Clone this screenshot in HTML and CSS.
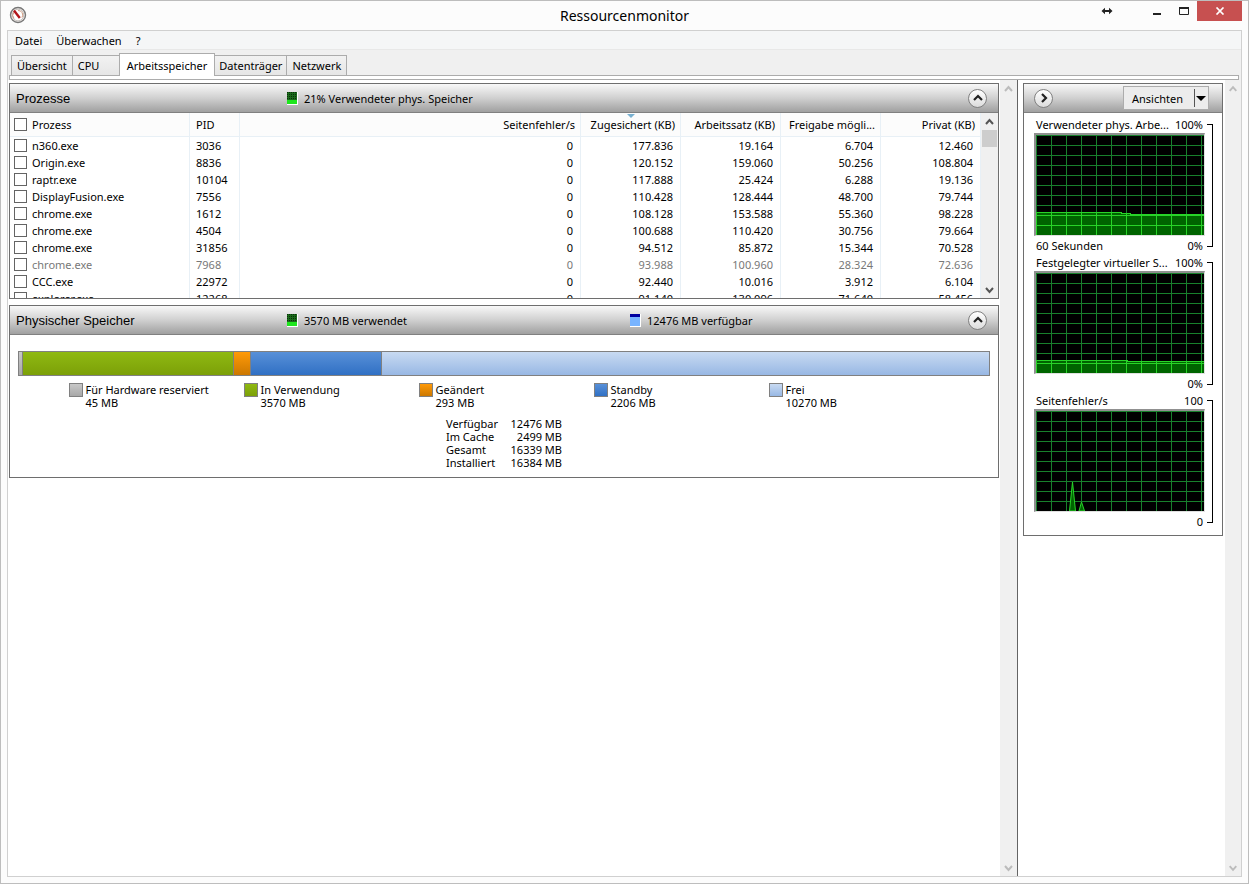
FILE: index.html
```html
<!DOCTYPE html>
<html lang="de">
<head>
  <meta charset="UTF-8">
  <title>Ressourcenmonitor</title>
  <link rel="stylesheet" href="styles.css">
</head>
<body>
  <div class="window">
    <header class="titlebar">
      <svg class="app-icon" width="18" height="18" viewBox="0 0 18 18">
        <circle cx="9" cy="9" r="7.5" fill="#f4f0ee" stroke="#777" stroke-width="1.4"/>
        <circle cx="9" cy="9" r="5.8" fill="#fff" stroke="#c9c4c0" stroke-width="1"/>
        <path d="M5 12.5A5 5 0 0 1 5 6M9 4.5a4.5 4.5 0 0 1 4 7" fill="none" stroke="#d09a80" stroke-width="1"/>
        <path d="M5 4.5l5.8 7.6" stroke="#b3161b" stroke-width="2.4"/>
      </svg>
      <h1 class="window-title">Ressourcenmonitor</h1>
      <div class="window-buttons">
        <button class="win-btn win-move" aria-label="Verschieben">
          <svg width="12" height="8" viewBox="0 0 12 8"><path d="M2 4h8" stroke="#222" stroke-width="2"/><path d="M0.5 4L4 0.8v6.4zM11.5 4L8 0.8v6.4z" fill="#222"/></svg>
        </button>
        <button class="win-btn" aria-label="Minimieren">
          <svg width="10" height="10" viewBox="0 0 10 10"><path d="M1 7h8v2H1z" fill="#222"/></svg>
        </button>
        <button class="win-btn" aria-label="Maximieren">
          <svg width="12" height="10" viewBox="0 0 12 10"><path d="M1.5 1.5h9v7h-9z" fill="none" stroke="#222"/><path d="M1 2h10" stroke="#222" stroke-width="2"/></svg>
        </button>
        <button class="win-btn win-close" aria-label="Schließen">
          <svg width="10" height="8" viewBox="0 0 10 8"><path d="M1.5 0.5l7 7M8.5 0.5l-7 7" stroke="#fff" stroke-width="1.7"/></svg>
        </button>
      </div>
    </header>

    <div class="client">
      <nav class="menubar">
        <button>Datei</button>
        <button>Überwachen</button>
        <button>?</button>
      </nav>

      <div class="tabs" role="tablist">
        <button class="tab" role="tab">Übersicht</button>
        <button class="tab" role="tab">CPU</button>
        <button class="tab active" role="tab" aria-selected="true">Arbeitsspeicher</button>
        <button class="tab" role="tab">Datenträger</button>
        <button class="tab" role="tab">Netzwerk</button>
      </div>
      <div class="tab-strip"></div>

      <div class="content">
        <main class="details">
          <section class="panel">
            <div class="panel-head">
              <h2>Prozesse</h2>
              <div class="metric"><span class="mini mini-green"></span>21% Verwendeter phys. Speicher</div>
              <div></div>
              <button class="round-btn" aria-label="Zuklappen"><svg width="10" height="8" viewBox="0 0 10 8"><path d="M1 6l4-4 4 4" fill="none" stroke="#222" stroke-width="2.2"/></svg></button>
            </div>
            <div class="list">
              <table class="process-table">
                <thead>
                  <tr>
                    <th class="col-name"><label><input type="checkbox"><span>Prozess</span></label></th>
                    <th class="col-pid">PID</th>
                    <th class="num">Seitenfehler/s</th>
                    <th class="num col-mem sorted">Zugesichert (KB)</th>
                    <th class="num col-mem">Arbeitssatz (KB)</th>
                    <th class="num col-mem">Freigabe mögli...</th>
                    <th class="num col-mem">Privat (KB)</th>
                  </tr>
                </thead>
                <tbody>
                  <tr><td><label><input type="checkbox">n360.exe</label></td><td>3036</td><td class="num">0</td><td class="num">177.836</td><td class="num">19.164</td><td class="num">6.704</td><td class="num">12.460</td></tr>
                  <tr><td><label><input type="checkbox">Origin.exe</label></td><td>8836</td><td class="num">0</td><td class="num">120.152</td><td class="num">159.060</td><td class="num">50.256</td><td class="num">108.804</td></tr>
                  <tr><td><label><input type="checkbox">raptr.exe</label></td><td>10104</td><td class="num">0</td><td class="num">117.888</td><td class="num">25.424</td><td class="num">6.288</td><td class="num">19.136</td></tr>
                  <tr><td><label><input type="checkbox">DisplayFusion.exe</label></td><td>7556</td><td class="num">0</td><td class="num">110.428</td><td class="num">128.444</td><td class="num">48.700</td><td class="num">79.744</td></tr>
                  <tr><td><label><input type="checkbox">chrome.exe</label></td><td>1612</td><td class="num">0</td><td class="num">108.128</td><td class="num">153.588</td><td class="num">55.360</td><td class="num">98.228</td></tr>
                  <tr><td><label><input type="checkbox">chrome.exe</label></td><td>4504</td><td class="num">0</td><td class="num">100.688</td><td class="num">110.420</td><td class="num">30.756</td><td class="num">79.664</td></tr>
                  <tr><td><label><input type="checkbox">chrome.exe</label></td><td>31856</td><td class="num">0</td><td class="num">94.512</td><td class="num">85.872</td><td class="num">15.344</td><td class="num">70.528</td></tr>
                  <tr class="ended"><td><label><input type="checkbox">chrome.exe</label></td><td>7968</td><td class="num">0</td><td class="num">93.988</td><td class="num">100.960</td><td class="num">28.324</td><td class="num">72.636</td></tr>
                  <tr><td><label><input type="checkbox">CCC.exe</label></td><td>22972</td><td class="num">0</td><td class="num">92.440</td><td class="num">10.016</td><td class="num">3.912</td><td class="num">6.104</td></tr>
                  <tr><td><label><input type="checkbox">explorer.exe</label></td><td>12268</td><td class="num">0</td><td class="num">91.140</td><td class="num">130.096</td><td class="num">71.640</td><td class="num">58.456</td></tr>
                </tbody>
              </table>
              <div class="scrollbar">
                <svg class="arrow" viewBox="0 0 17 17"><path d="M5 11l3.5-4 3.5 4"/></svg>
                <div class="thumb"></div>
                <svg class="arrow last" viewBox="0 0 17 17"><path d="M5 7l3.5 4L12 7"/></svg>
              </div>
            </div>
          </section>

          <section class="panel">
            <div class="panel-head">
              <h2>Physischer Speicher</h2>
              <div class="metric"><span class="mini mini-green"></span>3570 MB verwendet</div>
              <div class="metric"><span class="mini mini-blue"></span>12476 MB verfügbar</div>
              <button class="round-btn" aria-label="Zuklappen"><svg width="10" height="8" viewBox="0 0 10 8"><path d="M1 6l4-4 4 4" fill="none" stroke="#222" stroke-width="2.2"/></svg></button>
            </div>
            <div class="memory">
              <!-- segment widths follow the MB values -->
              <div class="memory-bar">
                <div class="hardware" style="flex-grow: 45"></div>
                <div class="used" style="flex-grow: 3570"></div>
                <div class="modified" style="flex-grow: 293"></div>
                <div class="standby" style="flex-grow: 2206"></div>
                <div class="free" style="flex-grow: 10270"></div>
              </div>
              <ul class="legend">
                <li><span class="swatch hardware"></span><div>Für Hardware reserviert<br>45 MB</div></li>
                <li><span class="swatch used"></span><div>In Verwendung<br>3570 MB</div></li>
                <li><span class="swatch modified"></span><div>Geändert<br>293 MB</div></li>
                <li><span class="swatch standby"></span><div>Standby<br>2206 MB</div></li>
                <li><span class="swatch free"></span><div>Frei<br>10270 MB</div></li>
              </ul>
              <table class="totals">
                <tr><th>Verfügbar</th><td>12476 MB</td></tr>
                <tr><th>Im Cache</th><td>2499 MB</td></tr>
                <tr><th>Gesamt</th><td>16339 MB</td></tr>
                <tr><th>Installiert</th><td>16384 MB</td></tr>
              </table>
            </div>
          </section>
        </main>
        <div class="scrollbar disabled">
          <svg class="arrow" viewBox="0 0 17 17"><path d="M5 11l3.5-4 3.5 4"/></svg>
          <svg class="arrow last" viewBox="0 0 17 17"><path d="M5 7l3.5 4L12 7"/></svg>
        </div>

        <aside class="graphs">
          <section class="panel">
            <div class="panel-head graph-head">
              <button class="round-btn" aria-label="Ausblenden"><svg width="8" height="10" viewBox="0 0 8 10"><path d="M2 1l4 4-4 4" fill="none" stroke="#222" stroke-width="2.2"/></svg></button>
              <button class="views-btn">Ansichten<span class="views-arrow"></span></button>
            </div>
            <div class="graph-list">
              <div class="graph">
                <div class="graph-body">
                  <div class="graph-label"><span>Verwendeter phys. Arbe...</span><span>100%</span></div>
                  <svg class="plot" viewBox="0 0 168 100" shape-rendering="crispEdges">
                    <defs>
                      <pattern id="grid" width="15" height="10" patternUnits="userSpaceOnUse"><path d="M0 0h15v1H1v9H0z" fill="#18802c"/></pattern>
                      <pattern id="gridLit" width="15" height="10" patternUnits="userSpaceOnUse"><path d="M0 0h15v1H1v9H0z" fill="#28d428"/></pattern>
                    </defs>
                    <rect width="168" height="100" fill="url(#grid)"/>
                    <path d="M0 77h86v1h9v1h73v21H0z" fill="#006400"/>
                    <path d="M0 77h86v1h9v1h73v21H0z" fill="url(#gridLit)"/>
                    <path d="M0 77h86v1h9v1h73v1H94v-1h-9v-1H0z" fill="#28d428"/>
                  </svg>
                  <div class="graph-label"><span>60 Sekunden</span><span>0%</span></div>
                </div>
                <div class="bracket"></div>
              </div>
              <div class="graph">
                <div class="graph-body">
                  <div class="graph-label"><span>Festgelegter virtueller S...</span><span>100%</span></div>
                  <svg class="plot" viewBox="0 0 168 100" shape-rendering="crispEdges">
                    <rect width="168" height="100" fill="url(#grid)"/>
                    <path d="M0 87h92v1h76v12H0z" fill="#006400"/>
                    <path d="M0 87h92v1h76v12H0z" fill="url(#gridLit)"/>
                    <path d="M0 87h92v1h76v1H91v-1H0z" fill="#28d428"/>
                  </svg>
                  <div class="graph-label"><span></span><span>0%</span></div>
                </div>
                <div class="bracket"></div>
              </div>
              <div class="graph">
                <div class="graph-body">
                  <div class="graph-label"><span>Seitenfehler/s</span><span>100</span></div>
                  <svg class="plot" viewBox="0 0 168 100">
                    <rect width="168" height="100" fill="url(#grid)" shape-rendering="crispEdges"/>
                    <path d="M33.5 100l3-29 3 29zM43 100l2.5-9 3 9z" fill="#006400" stroke="#28d428"/>
                  </svg>
                  <div class="graph-label"><span></span><span>0</span></div>
                </div>
                <div class="bracket"></div>
              </div>
            </div>
          </section>
        </aside>
        <div class="scrollbar outer disabled">
          <svg class="arrow" viewBox="0 0 17 17"><path d="M5 11l3.5-4 3.5 4"/></svg>
          <svg class="arrow last" viewBox="0 0 17 17"><path d="M5 7l3.5 4L12 7"/></svg>
        </div>
      </div>
    </div>
  </div>
</body>
</html>
```

FILE: styles.css
```css
* {
  box-sizing: border-box;
}

body {
  margin: 0;
  font-family: "Noto Sans", "Open Sans", sans-serif;
  font-size: 11px;
  line-height: 13px;
  color: #000;
}

button {
  font: inherit;
  color: inherit;
  border: none;
  background: none;
  padding: 0;
}

svg {
  display: block;
}

.window {
  display: flex;
  flex-direction: column;
  height: 100vh;
  padding: 0 6px 6px;
  border: 1px solid #bdbdbd;
  background: #fcfcfc;
}

/* title bar */

.titlebar {
  display: grid;
  grid-template-columns: 1fr auto 1fr;
  height: 29px;
}

.app-icon {
  margin: 5px 0 0 2px;
}

.window-title {
  margin: 0;
  font-size: 14px;
  font-weight: normal;
  line-height: 29px;
}

.window-buttons {
  display: flex;
  justify-content: flex-end;
  align-items: flex-start;
}

.win-btn {
  display: flex;
  align-items: center;
  justify-content: center;
  width: 27px;
  height: 20px;
}

.win-move {
  margin-right: 23px;
}

.win-close {
  width: 45px;
  background: #c75050;
}

/* menu and tabs */

.client {
  flex: 1;
  display: flex;
  flex-direction: column;
  min-height: 0;
  border: 1px solid #d0d0d0;
  background: #f0f0f0;
}

.menubar {
  display: flex;
  gap: 14px;
  height: 19px;
  padding-left: 7px;
  background: #f5f6f7;
  border-bottom: 1px solid #e8e8e8;
}

.tabs {
  display: flex;
  align-items: flex-end;
  height: 25px;
  padding-left: 3px;
}

.tab {
  height: 20px;
  min-width: 47px;
  padding: 0 5px;
  text-align: left;
  border: 1px solid #acacac;
  border-width: 1px 1px 0 0;
  background: linear-gradient(#f2f2f2, #e6e6e6);
}

.tab:first-child {
  border-left-width: 1px;
}

.tab.active {
  height: 23px;
  margin: 0 0 -1px -1px;
  padding: 0 7px;
  border-left-width: 1px;
  background: #fff;
  z-index: 1;
}

.tab.active + .tab {
  padding: 0 4px;
}

.tab-strip {
  height: 5px;
  margin: 0 2px 0 1px;
  border: 1px solid #acacac;
  background: #fff;
}

/* panes */

.content {
  flex: 1;
  display: flex;
  min-height: 0;
  background: #fff;
}

.details {
  flex: 1;
  min-width: 0;
  display: flex;
  flex-direction: column;
  gap: 6px;
  padding: 3px 1px;
}

.graphs {
  width: 208px;
  padding: 3px 2px 0 5px;
  border-left: 1px solid #646464;
}

.panel {
  border: 1px solid #6e6e6e;
  background: #fff;
}

.panel-head {
  display: grid;
  grid-template-columns: 271px 343px 1fr 20px;
  align-items: center;
  height: 29px;
  padding: 0 10px 0 6px;
  border-bottom: 1px solid #808080;
  background: linear-gradient(#f8f8f8, #d0d0d0 50%, #a0a0a0);
}

.panel-head h2 {
  margin: 0;
  font-family: "Liberation Sans", Arial, sans-serif;
  font-size: 13px;
  font-weight: normal;
}

.panel-head .round-btn {
  grid-column: -2;
}

.metric {
  display: flex;
  align-items: center;
  gap: 6px;
}

.mini {
  width: 11px;
  height: 13px;
  border: 1px solid #fff;
  border-width: 0 1px 1px 0;
}

.mini-green {
  background:
    linear-gradient(transparent 8px, #1ee61e 8px),
    repeating-linear-gradient(90deg, transparent 0 1px, #1a6a1a 1px 2px),
    repeating-linear-gradient(#083008 0 1px, #1a6a1a 1px 2px);
}

.mini-blue {
  background: linear-gradient(#0000a0 3px, #78b4ff 3px);
}

.round-btn {
  display: flex;
  align-items: center;
  justify-content: center;
  width: 19px;
  height: 19px;
  border: 1px solid #808080;
  border-radius: 50%;
  background: linear-gradient(#fff, #dcdcdc);
}

/* process list */

.list {
  display: flex;
  height: 185px;
  overflow: hidden;
}

.process-table {
  flex: 1;
  align-self: flex-start;
  table-layout: fixed;
  border-collapse: separate;
  border-spacing: 0;
}

.process-table th,
.process-table td {
  height: 17px;
  padding: 0 6px;
  font-weight: normal;
  text-align: left;
  white-space: nowrap;
  border-right: 1px solid #e8f0f6;
}

.process-table th {
  height: 24px;
  background: #fcfcfc;
  border-bottom: 1px solid #e8f0f6;
}

.process-table .num {
  text-align: right;
}

.process-table th.num {
  padding-right: 5px;
}

.process-table td.num {
  padding-right: 7px;
}

.process-table label {
  display: flex;
  align-items: center;
  gap: 5px;
  margin-left: -2px;
}

.col-name {
  width: 180px;
}

.col-pid {
  width: 50px;
}

.col-mem {
  width: 100px;
}

.sorted {
  position: relative;
}

.sorted::after {
  content: "";
  position: absolute;
  top: 1px;
  left: 46px;
  border: 4px solid transparent;
  border-top-color: #78b0d0;
  border-bottom-width: 0;
}

.ended {
  color: #787878;
}

input[type="checkbox"] {
  appearance: none;
  width: 13px;
  height: 13px;
  margin: 0;
  border: 1px solid #646464;
  background: #fff;
}

/* scrollbars */

.scrollbar {
  display: flex;
  flex-direction: column;
  width: 17px;
  background: #f0f0f0;
}

.scrollbar.outer {
  width: 16px;
}

.arrow {
  width: 100%;
  height: 17px;
  fill: none;
  stroke: #555;
  stroke-width: 2;
}

.disabled .arrow {
  stroke: #bcbcbc;
}

.arrow.last {
  margin-top: auto;
}

.thumb {
  height: 17px;
  margin: 0 1px;
  background: #cdcdcd;
}

/* physical memory */

.memory {
  padding: 16px 8px 8px;
}

.memory-bar {
  display: flex;
  height: 25px;
  border: 1px solid #808080;
}

.memory-bar div {
  flex-basis: 0;
}

.memory-bar div + div {
  box-shadow: inset 1px 0 #808080;
}

.hardware {
  background: linear-gradient(#c8c8c8, #a8a8a8);
}

.used {
  background: linear-gradient(#8fb912, #7ca008);
}

.modified {
  background: linear-gradient(#ff9a08, #cc7800);
}

.standby {
  background: linear-gradient(#5890d8, #3070c4);
}

.free {
  background: linear-gradient(#c8daf2, #98b8e4);
}

.legend {
  display: grid;
  grid-template-columns: repeat(5, 175px);
  justify-content: center;
  margin: 7px 0 8px;
  padding: 0 0 0 4px;
  list-style: none;
}

.legend li {
  display: flex;
  gap: 3px;
}

.swatch {
  width: 14px;
  height: 14px;
  border: 1px solid #808080;
}

.totals {
  width: 116px;
  margin: 0 auto;
  border-collapse: collapse;
}

.totals th,
.totals td {
  padding: 0;
  font-weight: normal;
  text-align: left;
  white-space: nowrap;
}

.totals td {
  text-align: right;
}

/* graphs */

.graph-head {
  display: flex;
  justify-content: space-between;
  padding: 0 13px 0 10px;
}

.views-btn {
  display: flex;
  align-items: center;
  justify-content: space-between;
  width: 86px;
  height: 24px;
  padding: 0 2px 0 8px;
  border: 1px solid #acacac;
  background: #ececec;
}

.views-arrow {
  display: flex;
  align-items: center;
  height: 18px;
  padding-left: 1px;
  border-left: 1px solid #555;
}

.views-arrow::after {
  content: "";
  border: 5px solid transparent;
  border-top-color: #000;
  border-bottom-width: 0;
}

.graph-list {
  padding: 4px 9px 4px 10px;
}

.graph {
  display: flex;
  justify-content: space-between;
  height: 138px;
}

.graph-body {
  width: 171px;
}

.graph-label {
  display: flex;
  justify-content: space-between;
  height: 16px;
  padding: 1px 2px 0;
  white-space: nowrap;
}

.plot {
  width: 171px;
  height: 103px;
  border: solid #909090;
  border-width: 2px 1px 1px 2px;
  border-right-color: #e0e0e0;
  border-bottom-color: #e0e0e0;
  background: #000;
}

.graph-label:last-child {
  padding-top: 3px;
}

.bracket {
  width: 6px;
  height: 123px;
  margin-top: 7px;
  border: 1px solid #000;
  border-left: none;
}
```
